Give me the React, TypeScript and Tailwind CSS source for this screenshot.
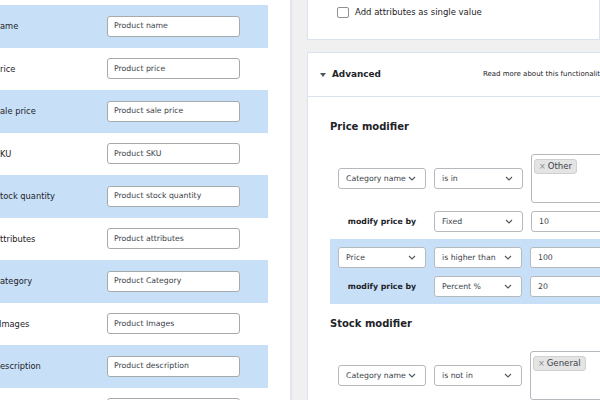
import React from "react";

const rows = [
  { label: "ame", ph: "Product name", blue: true },
  { label: "rice", ph: "Product price", blue: false },
  { label: "ale price", ph: "Product sale price", blue: true },
  { label: "KU", ph: "Product SKU", blue: false },
  { label: "tock quantity", ph: "Product stock quantity", blue: true },
  { label: "ttributes", ph: "Product attributes", blue: false },
  { label: "ategory", ph: "Product Category", blue: true },
  { label: "Images", ph: "Product Images", blue: false, shift: true },
  { label: "escription", ph: "Product description", blue: true },
  { label: "", ph: "", blue: false },
];

function Chevron() {
  return (
    <svg width="8" height="5" viewBox="0 0 8 5" className="shrink-0">
      <path d="M1 1 L4 4 L7 1" fill="none" stroke="#50575e" strokeWidth="1.1" />
    </svg>
  );
}

function Select({ text, w }: { text: string; w: string }) {
  return (
    <div
      className={`${w} h-[21px] shrink-0 flex items-center justify-between pl-[7px] pr-[9px] bg-white border border-[#b4b9be] rounded-[3px] text-[7.75px] text-[#3c434a]`}
    >
      <span className="whitespace-nowrap">{text}</span>
      <Chevron />
    </div>
  );
}

function TextBox({ text }: { text: string }) {
  return (
    <div className="w-[120px] h-[21px] shrink-0 flex items-center pl-[7px] bg-white border border-[#b4b9be] rounded-[3px] text-[7.75px] text-[#3c434a]">
      {text}
    </div>
  );
}

function Multi({ tag }: { tag: string }) {
  return (
    <div className="w-[120px] h-[49px] shrink-0 flex items-start bg-white border border-[#b4b9be] rounded-[3px] pl-[2px] pt-[4px]">
      <span className="flex items-center h-[15px] px-[4px] bg-[#e4e4e4] border border-[#d0d0d0] rounded-[3px] text-[8.6px] text-[#3c434a] whitespace-nowrap">
        <span className="text-[#8a8a8a] mr-[2px] text-[8px]">×</span>
        {tag}
      </span>
    </div>
  );
}

function Label({ text }: { text: string }) {
  return (
    <div className="w-[88px] shrink-0 text-center font-bold text-[7.8px] text-[#1d2327] whitespace-nowrap">
      {text}
    </div>
  );
}

export default function App() {
  return (
    <div className="w-[600px] h-[400px] overflow-hidden flex bg-[#f0f0f1] font-['DejaVu_Sans',sans-serif] text-[#1d2327]">
      {/* Left panel */}
      <div className="w-[292px] shrink-0 h-full bg-white border-r-2 border-[#e1e6ee] pt-[5px] pr-[22px]">
        {rows.map((r, i) => (
          <div
            key={i}
            className={`h-[42.5px] flex items-center ${r.blue ? "bg-[#c8dff8]" : ""}`}
          >
            <div className={`w-[107px] shrink-0 text-[8.3px] whitespace-nowrap ${r.shift ? "[text-indent:-1px]" : ""}`}>
              {r.label}
            </div>
            <div className="w-[133px] h-[21px] shrink-0 flex items-center pl-[6px] bg-white border border-[#a7aaad] rounded-[3px] text-[7.75px] text-[#3c434a] whitespace-nowrap">
              {r.ph}
            </div>
          </div>
        ))}
      </div>

      {/* Right column */}
      <div className="ml-[15px] flex-1 min-w-0 flex flex-col">
        {/* Top card */}
        <div className="h-[40px] shrink-0 bg-white border-l border-r border-b border-[#dbe3ee]">
          <div className="h-[24px] flex items-center pl-[29px]">
            <div className="w-[12px] h-[11px] border border-[#8c8f94] rounded-[2px] bg-white" />
            <span className="ml-[6px] text-[8.5px] text-[#1d2327] whitespace-nowrap">
              Add attributes as single value
            </span>
          </div>
        </div>

        {/* Advanced card */}
        <div className="mt-[12px] flex-1 bg-white border border-[#dbe3ee] w-[320px]">
          <div className="h-[44px] flex items-center border-b border-[#dbe3ee] pl-[12px]">
            <div className="w-0 h-0 border-l-[3px] border-r-[3px] border-t-[4px] border-l-transparent border-r-transparent border-t-[#50575e]" />
            <span className="ml-[6px] font-bold text-[8.9px] text-[#1d2327]">Advanced</span>
            <span className="ml-[102px] text-[7px] text-[#1d2327] whitespace-nowrap">
              Read more about this functionality
            </span>
          </div>

          <div className="pl-[22px] pt-[24px]">
            <div className="font-bold text-[10px] leading-[12px] text-[#1d2327]">Price modifier</div>

            <div className="mt-[13px] flex flex-col gap-2 pt-2 pb-[7px] pl-2">
              <div className="flex items-center gap-2">
                <Select text="Category name" w="w-[88px]" />
                <Select text="is in" w="w-[89px]" />
                <Multi tag="Other" />
              </div>
              <div className="flex items-center gap-2">
                <Label text="modify price by" />
                <Select text="Fixed" w="w-[89px]" />
                <TextBox text="10" />
              </div>
            </div>

            <div className="flex flex-col gap-2 pt-2 pb-[7px] pl-2 bg-[#c8dff8]">
              <div className="flex items-center gap-2">
                <Select text="Price" w="w-[88px]" />
                <Select text="is higher than" w="w-[88px]" />
                <TextBox text="100" />
              </div>
              <div className="flex items-center gap-2">
                <Label text="modify price by" />
                <Select text="Percent %" w="w-[88px]" />
                <TextBox text="20" />
              </div>
            </div>

            <div className="mt-[14px] font-bold text-[10px] leading-[12px] text-[#1d2327]">Stock modifier</div>

            <div className="mt-[13px] flex flex-col gap-2 pt-2 pl-2">
              <div className="flex items-center gap-2">
                <Select text="Category name" w="w-[88px]" />
                <Select text="is not in" w="w-[88px]" />
                <Multi tag="General" />
              </div>
            </div>
          </div>
        </div>
      </div>
    </div>
  );
}
